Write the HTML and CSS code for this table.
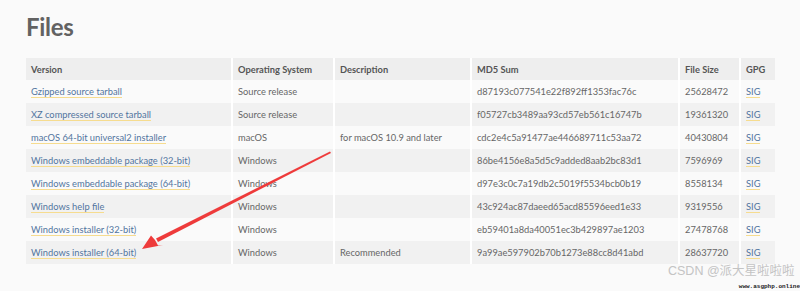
FILE: index.html
```html
<!DOCTYPE html>
<html lang="en">
<head>
  <meta charset="UTF-8" />
  <title>Files</title>
  <link rel="stylesheet" href="styles.css">
</head>
<body>
  <div class="page">
    <h1>Files</h1>
    <table class="files">
      <colgroup>
        <col class="c-version">
        <col class="c-os">
        <col class="c-desc">
        <col class="c-md5">
        <col class="c-size">
        <col class="c-gpg">
      </colgroup>
      <thead>
        <tr>
          <th>Version</th>
          <th>Operating System</th>
          <th>Description</th>
          <th>MD5 Sum</th>
          <th>File Size</th>
          <th>GPG</th>
        </tr>
      </thead>
      <tbody>
        <tr>
          <td><a href="#">Gzipped source tarball</a></td>
          <td>Source release</td>
          <td></td>
          <td>d87193c077541e22f892ff1353fac76c</td>
          <td>25628472</td>
          <td><a href="#">SIG</a></td>
        </tr>
        <tr>
          <td><a href="#">XZ compressed source tarball</a></td>
          <td>Source release</td>
          <td></td>
          <td>f05727cb3489aa93cd57eb561c16747b</td>
          <td>19361320</td>
          <td><a href="#">SIG</a></td>
        </tr>
        <tr>
          <td><a href="#">macOS 64-bit universal2 installer</a></td>
          <td>macOS</td>
          <td>for macOS 10.9 and later</td>
          <td>cdc2e4c5a91477ae446689711c53aa72</td>
          <td>40430804</td>
          <td><a href="#">SIG</a></td>
        </tr>
        <tr>
          <td><a href="#">Windows embeddable package (32-bit)</a></td>
          <td>Windows</td>
          <td></td>
          <td>86be4156e8a5d5c9added8aab2bc83d1</td>
          <td>7596969</td>
          <td><a href="#">SIG</a></td>
        </tr>
        <tr>
          <td><a href="#">Windows embeddable package (64-bit)</a></td>
          <td>Windows</td>
          <td></td>
          <td>d97e3c0c7a19db2c5019f5534bcb0b19</td>
          <td>8558134</td>
          <td><a href="#">SIG</a></td>
        </tr>
        <tr>
          <td><a href="#">Windows help file</a></td>
          <td>Windows</td>
          <td></td>
          <td>43c924ac87daeed65acd85596eed1e33</td>
          <td>9319556</td>
          <td><a href="#">SIG</a></td>
        </tr>
        <tr>
          <td><a href="#">Windows installer (32-bit)</a></td>
          <td>Windows</td>
          <td></td>
          <td>eb59401a8da40051ec3b429897ae1203</td>
          <td>27478768</td>
          <td><a href="#">SIG</a></td>
        </tr>
        <tr>
          <td><a href="#">Windows installer (64-bit)</a></td>
          <td>Windows</td>
          <td>Recommended</td>
          <td>9a99ae597902b70b1273e88cc8d41abd</td>
          <td>28637720</td>
          <td><a href="#">SIG</a></td>
        </tr>
      </tbody>
    </table>
  </div>

  <!-- red annotation arrow drawn over the table -->
  <svg class="arrow" width="800" height="291" viewBox="0 0 800 291">
    <polygon points="330,151.5 331,153 158,242 156,238.5" fill="#ee3b3b" />
    <polygon points="142,249 151,235.5 155,240 158,245.5 163,245" fill="#ee3b3b" />
  </svg>

  <div class="watermark">
    <span class="wm-main">CSDN @派大星啦啦啦</span>
    <span class="wm-site">www.asgphp.online</span>
  </div>
</body>
</html>
```

FILE: styles.css
```css
* {
  box-sizing: border-box;
  margin: 0;
  padding: 0;
}

body {
  background: #fafafa;
  font-family: Lato, "Open Sans", sans-serif;
  color: #666666;
  width: 800px;
  height: 291px;
  overflow: hidden;
  position: relative;
}

.page {
  padding: 12px 25px 0 26px;
}

h1 {
  font-size: 24px;
  font-weight: 700;
  color: #626262;
  line-height: 30px;
  letter-spacing: -0.3px;
  margin-bottom: 16px;
}

.files {
  border-collapse: collapse;
  table-layout: fixed;
  width: 749px;
  font-size: 9.3px;
}

.c-version { width: 206px; }
.c-os { width: 102px; }
.c-desc { width: 137px; }
.c-md5 { width: 208px; }
.c-size { width: 61px; }
.c-gpg { width: 35px; }

.files th,
.files td {
  text-align: left;
  padding: 0 5px;
  white-space: nowrap;
  overflow: hidden;
  border-left: 2px solid #ffffff;
}

.files th:first-child,
.files td:first-child {
  border-left: none;
}

.files th {
  height: 22px;
  background: #eeeeee;
  color: #555555;
  font-weight: 700;
}

.files td {
  height: 23px;
  background: #fafafa;
}

.files tbody tr:nth-child(even) td {
  background: #f1f1f1;
}

.files a {
  color: #52759f;
  text-decoration: none;
  border-bottom: 1px solid #f6dc8f;
}

.arrow {
  position: absolute;
  left: 0;
  top: 0;
  pointer-events: none;
}

.watermark {
  position: absolute;
  right: 0;
  bottom: 0;
  width: 140px;
  height: 31px;
}

.wm-main {
  position: absolute;
  left: 8px;
  top: 3px;
  white-space: nowrap;
  font-family: "Liberation Sans", "Noto Sans CJK SC", sans-serif;
  font-size: 12.5px;
  line-height: 16px;
  color: #c4c4c4;
}

.wm-site {
  position: absolute;
  right: 0;
  bottom: 0;
  white-space: nowrap;
  font-family: "Liberation Mono", monospace;
  font-size: 6px;
  font-weight: 700;
  color: #222222;
  line-height: 8px;
}
```
